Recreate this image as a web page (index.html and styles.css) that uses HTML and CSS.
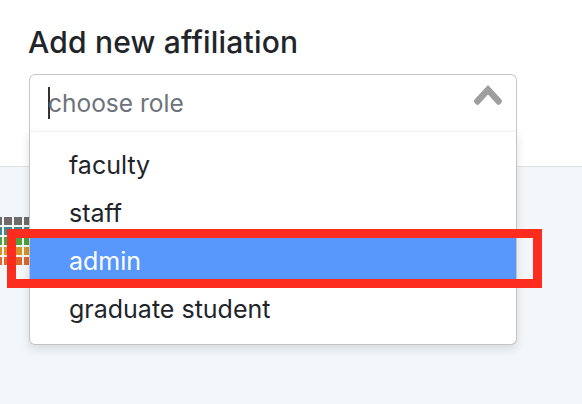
FILE: index.html
```html
<!DOCTYPE html>
<html>
<head>
<meta charset="utf-8">
<link rel="stylesheet" href="styles.css">
</head>
<body>
<div class="page">
  <section class="header">
    <h2 class="title">Add new affiliation</h2>
    <div class="select">
      <div class="select-box">
        <span class="caret"></span>
        <span class="placeholder">choose role</span>
        <svg class="chevron" viewBox="0 0 14 10" width="28" height="20" aria-hidden="true">
          <path transform="rotate(180 7 5)" d="M9.211364 7.59931l4.48338-4.867229c.407008-.441854.407008-1.158247 0-1.60046l-.73712-.80023c-.407008-.441854-1.066904-.441854-1.474243 0L7 5.198617 2.51662.33139c-.407008-.441853-1.066904-.441853-1.474243 0l-.737121.80023c-.407008.441854-.407008 1.158248 0 1.600461l4.48338 4.867228L7 10l2.211364-2.40069z"/>
        </svg>
      </div>
      <ul class="menu">
        <li class="option">faculty</li>
        <li class="option">staff</li>
        <li class="option highlight">admin</li>
        <li class="option">graduate student</li>
      </ul>
    </div>
  </section>
  <section class="content">
    <div class="heatmap">
      <span class="cell c-gray"></span><span class="cell c-gray"></span><span class="cell c-gray"></span><span class="cell c-gray"></span>
      <span class="cell c-teal"></span><span class="cell c-teal"></span><span class="cell c-teal"></span><span class="cell c-teal"></span>
      <span class="cell c-green"></span><span class="cell c-green"></span><span class="cell c-green"></span><span class="cell c-green"></span>
      <span class="cell c-orange"></span><span class="cell c-orange"></span><span class="cell c-orange"></span><span class="cell c-orange"></span>
      <span class="cell c-red"></span><span class="cell c-red"></span><span class="cell c-red"></span><span class="cell c-red"></span>
    </div>
  </section>
  <div class="annotation"></div>
</div>
</body>
</html>
```

FILE: styles.css
```css
html, body {
  margin: 0;
  padding: 0;
}

body {
  font-family: Inter, "Noto Sans", "DejaVu Sans", sans-serif;
  color: #212529;
  background: #f4f7fa;
}

.page {
  position: relative;
  width: 582px;
  height: 404px;
  overflow: hidden;
  display: flex;
  flex-direction: column;
}

.header {
  background: #ffffff;
  height: 167px;
  flex: none;
  border-bottom: 1px solid #dde1e6;
  padding: 24px 0 0 28px;
  box-sizing: border-box;
}

.title {
  margin: 0;
  font-size: 30px;
  font-weight: 500;
  line-height: 36px;
  letter-spacing: 0.2px;
  color: #212529;
}

.select {
  position: relative;
  width: 488px;
  margin: 14px 0 0 1px;
  z-index: 2;
}

.select-box {
  height: 57px;
  box-sizing: border-box;
  border: 1px solid #c9c9c9;
  border-bottom: none;
  border-radius: 6px 6px 0 0;
  background: #ffffff;
  display: flex;
  align-items: center;
  padding: 0 14px 0 18px;
}

.caret {
  width: 2px;
  height: 32px;
  background: #333333;
  margin-right: -2px;
  flex: none;
}

.placeholder {
  font-size: 24.5px;
  color: #6c737a;
  flex: 1;
  line-height: 32px;
}

.chevron {
  fill: #9e9e9e;
  flex: none;
  margin-top: -16px;
}

.menu {
  position: absolute;
  top: 57px;
  left: 0;
  right: 0;
  margin: 0;
  padding: 10px 0 11px 0;
  list-style: none;
  background: #ffffff;
  border: 1px solid #c4c4c4;
  border-top: none;
  border-radius: 0 0 6px 6px;
  box-shadow: 0 4px 10px rgba(0, 0, 0, 0.12);
}

.menu::before {
  content: "";
  position: absolute;
  left: 0;
  right: 0;
  top: 0;
  height: 1px;
  background: #f3f3f3;
}

.option {
  height: 48px;
  line-height: 48px;
  font-size: 25px;
  padding: 0 0 0 39px;
  color: #212529;
}

.option.highlight {
  background: #5897fb;
  color: #ffffff;
}

.content {
  flex: 1;
  background: #f4f7fa;
  padding-top: 50px;
}

.heatmap {
  display: grid;
  grid-template-columns: repeat(4, 8px);
  grid-auto-rows: 8px;
  gap: 2px;
  margin-left: -6px;
}

.cell {
  display: block;
}

.c-gray { background: #6f6b6b; }
.c-teal { background: #3e898b; }
.c-green { background: #4fa13b; }
.c-orange { background: #d6952b; }
.c-red { background: #e0672b; }

.annotation {
  position: absolute;
  left: 7px;
  top: 229px;
  width: 535px;
  height: 59px;
  box-sizing: border-box;
  border: 9px solid #fc2c1f;
  z-index: 3;
}
```
